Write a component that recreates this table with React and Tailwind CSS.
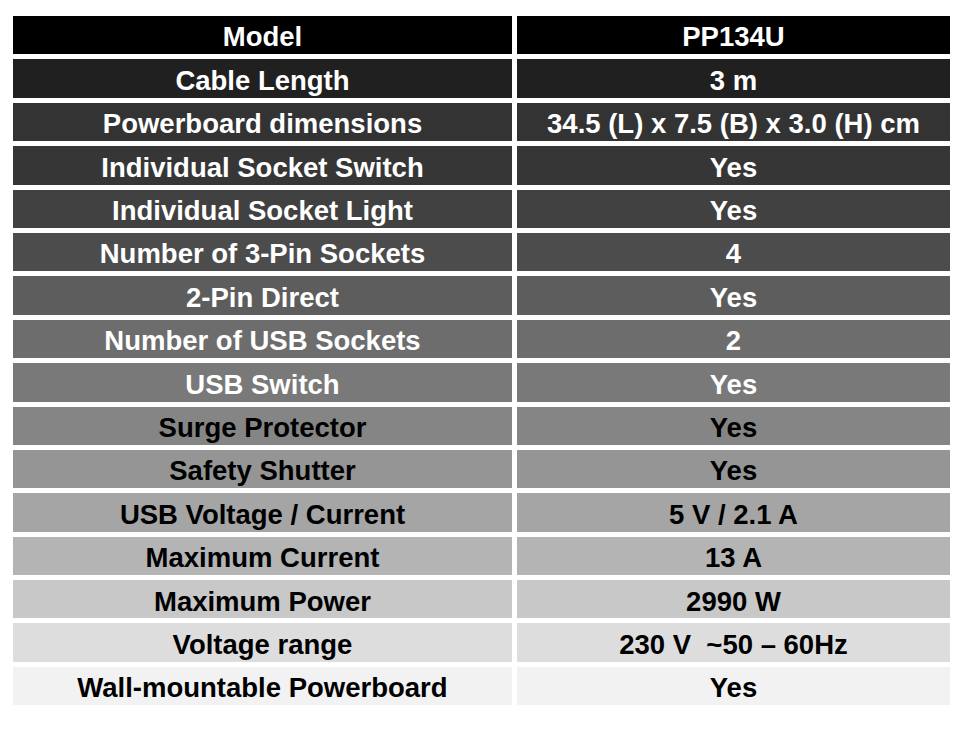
const rows = [
  { label: 'Model', value: 'PP134U', bg: 'bg-[#000000]', text: 'text-white' },
  { label: 'Cable Length', value: '3 m', bg: 'bg-[#202020]', text: 'text-white' },
  { label: 'Powerboard dimensions', value: '34.5 (L) x 7.5 (B) x 3.0 (H) cm', bg: 'bg-[#333333]', text: 'text-white' },
  { label: 'Individual Socket Switch', value: 'Yes', bg: 'bg-[#363636]', text: 'text-white' },
  { label: 'Individual Socket Light', value: 'Yes', bg: 'bg-[#414141]', text: 'text-white' },
  { label: 'Number of 3-Pin Sockets', value: '4', bg: 'bg-[#4c4c4c]', text: 'text-white' },
  { label: '2-Pin Direct', value: 'Yes', bg: 'bg-[#5d5d5d]', text: 'text-white' },
  { label: 'Number of USB Sockets', value: '2', bg: 'bg-[#6d6d6d]', text: 'text-white' },
  { label: 'USB Switch', value: 'Yes', bg: 'bg-[#797979]', text: 'text-white' },
  { label: 'Surge Protector', value: 'Yes', bg: 'bg-[#858585]', text: 'text-black' },
  { label: 'Safety Shutter', value: 'Yes', bg: 'bg-[#959595]', text: 'text-black' },
  { label: 'USB Voltage / Current', value: '5 V / 2.1 A', bg: 'bg-[#a5a5a5]', text: 'text-black' },
  { label: 'Maximum Current', value: '13 A', bg: 'bg-[#b4b4b4]', text: 'text-black' },
  { label: 'Maximum Power', value: '2990 W', bg: 'bg-[#c8c8c8]', text: 'text-black' },
  { label: 'Voltage range', value: '230 V\u00a0 ~50 \u2013 60Hz', bg: 'bg-[#dddddd]', text: 'text-black' },
  { label: 'Wall-mountable Powerboard', value: 'Yes', bg: 'bg-[#f2f2f2]', text: 'text-black' },
];

function Cell({ children, bg, text }) {
  return (
    <div className={`flex items-center justify-center whitespace-nowrap pt-[4px] ${bg} ${text}`}>
      {children}
    </div>
  );
}

export default function App() {
  return (
    <div className="min-h-[734px] w-[967px] bg-white pl-[13px] pt-[16px] font-['Liberation_Sans',Arial,sans-serif] text-[27.5px] font-bold leading-none">
      <div className="grid grid-cols-[499px_433px] auto-rows-[38.4px] gap-x-[5px] gap-y-[5px]">
        {rows.map((row) => [
          <Cell key={row.label + '-l'} bg={row.bg} text={row.text}>
            {row.label}
          </Cell>,
          <Cell key={row.label + '-r'} bg={row.bg} text={row.text}>
            {row.value}
          </Cell>,
        ])}
      </div>
    </div>
  );
}
